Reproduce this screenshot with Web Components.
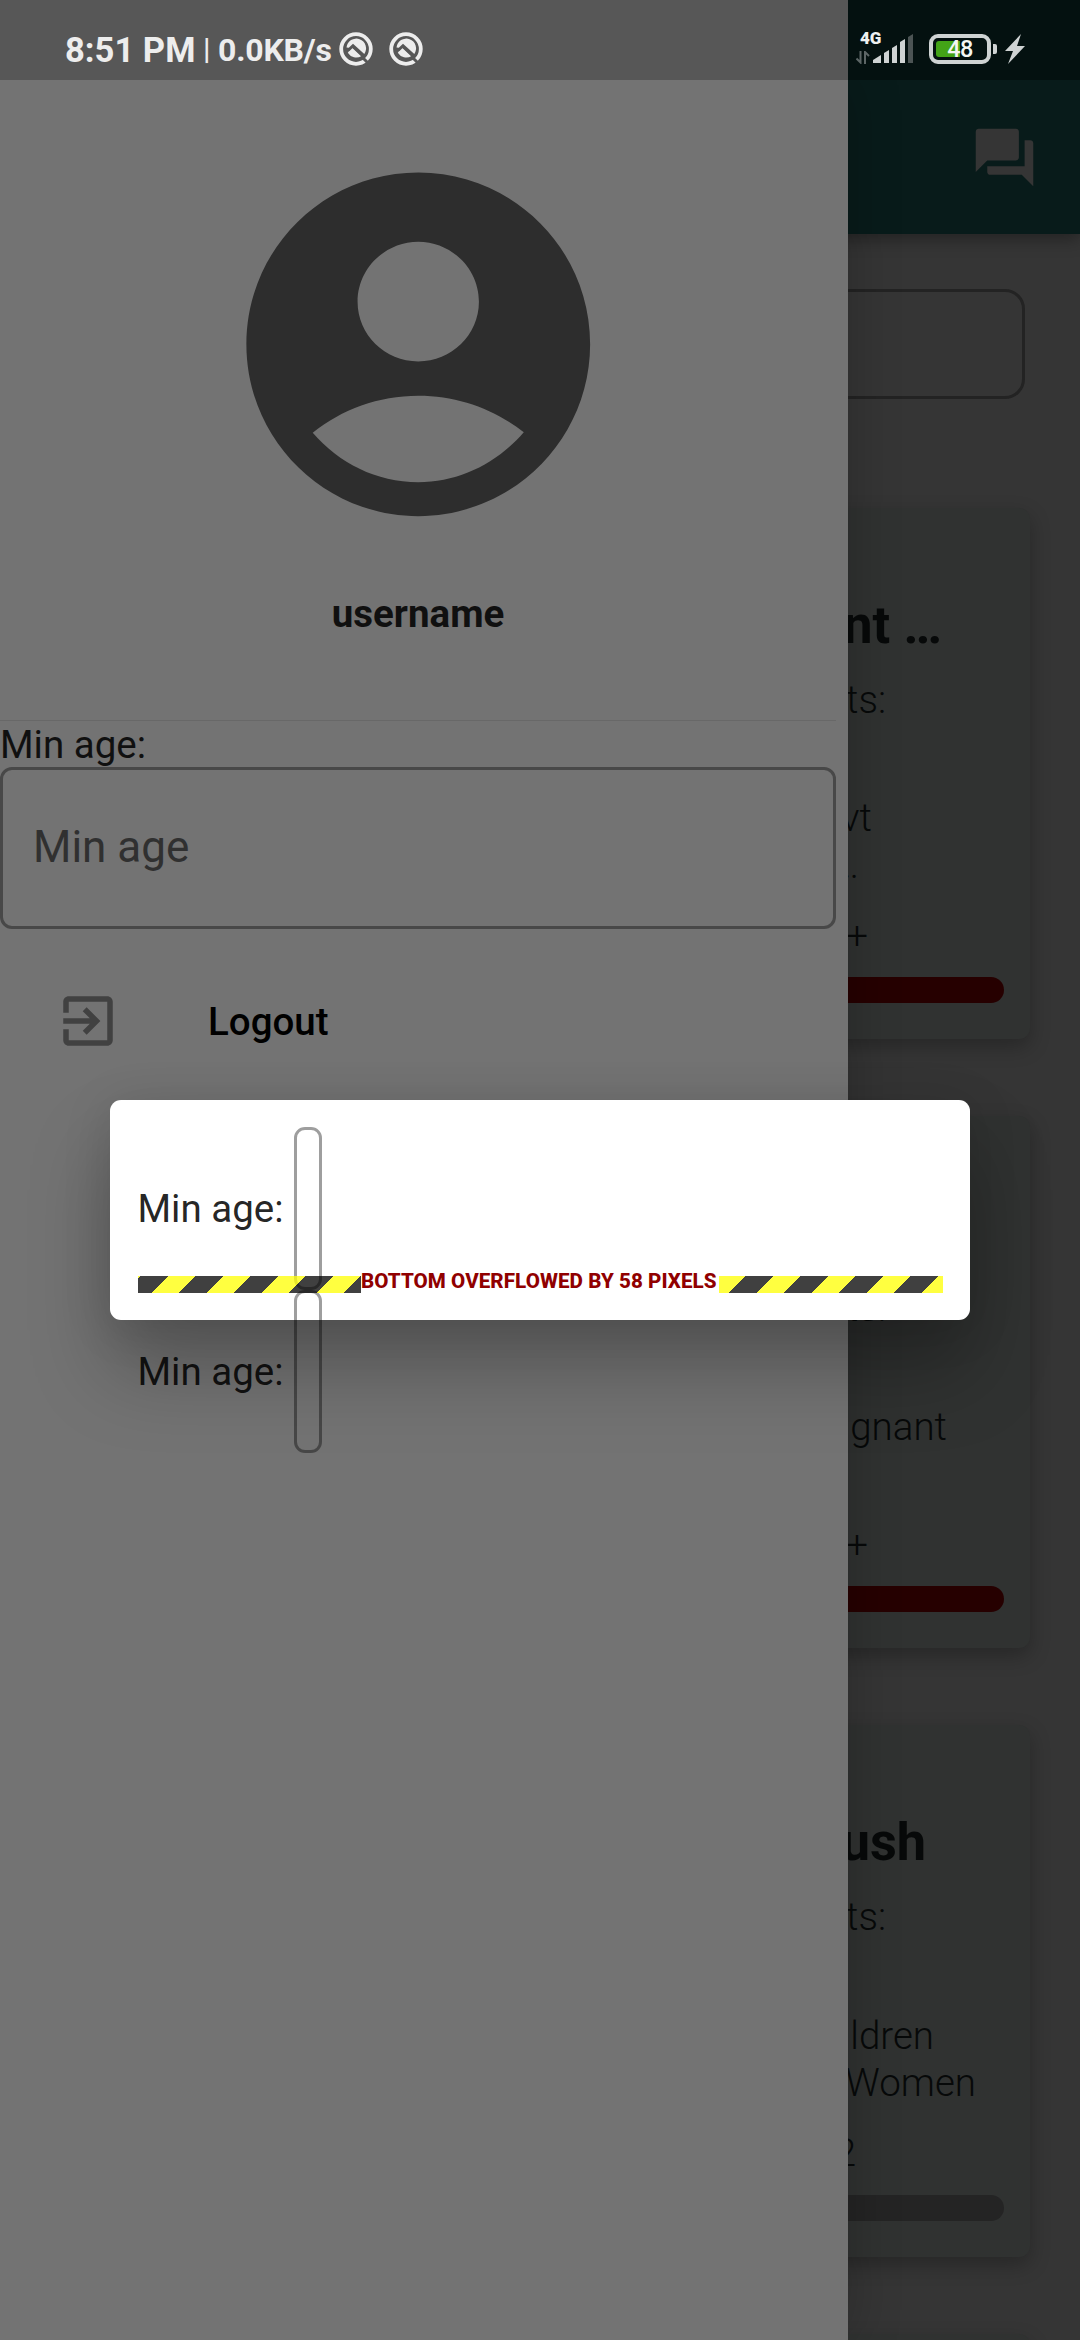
<!DOCTYPE html>
<html lang="en">
<head>
<meta charset="utf-8">
<title>Min age</title>
<style>
html,body{margin:0;padding:0;background:#353535}
body{font-family:Roboto,"Liberation Sans",sans-serif;width:1080px;height:2340px;overflow:hidden}
</style>
</head>
<body>
<app-screen></app-screen>
<script>
const define = (name, html) => customElements.define(name, class extends HTMLElement {
  constructor() {
    super();
    const t = document.createElement('template');
    t.innerHTML = html;
    this.attachShadow({ mode: 'open' }).appendChild(t.content.cloneNode(true));
  }
});

define('status-circle', `
<style>:host{display:flex;width:34px;height:34px}svg{display:block}</style>
<svg width="34" height="34" viewBox="0 0 34 34">
  <circle cx="17" cy="17" r="14.8" fill="none" stroke="#ededed" stroke-width="3.8"/>
  <path d="M7.5 15.500A9.8 9.8 0 1 1 25.300 22L14 11.800L9.800 15.800z" fill="#ededed"/>
  <path d="M13 15L22.500 24A9.8 9.8 0 0 1 8.800 20.800z" fill="#ededed"/>
  <path d="M9.5 18.500l4-3.800L25 25.500" stroke="#575757" stroke-width="2" fill="none"/>
  <path d="M23 25l6.500 6.500" stroke="#575757" stroke-width="3"/>
</svg>`);

define('status-bar', `
<style>
:host{display:flex;height:80px;color:#ededed;font-weight:700;white-space:nowrap}
.left{display:flex;width:848px;box-sizing:border-box;padding-left:65px;background:#575757;align-items:flex-start}
.right{display:flex;flex:1;background:#041110;align-items:flex-start}
.t{font-size:34.6px;line-height:40px;margin-top:30px;width:138px}
.p{font-size:30px;line-height:40px;margin-top:29px;width:15px;font-weight:500}
.k{font-size:32px;line-height:40px;margin-top:30px;width:121px;letter-spacing:-.2px}
status-circle{margin:32px 16px 0 0}
.net{width:15px;margin-left:8px;padding-top:29px}
.net b{display:block;font-size:17px;line-height:18px;margin-left:4px;color:#eef0f0}
.net svg{display:block;margin-top:4px}
.bars{margin:34px 0 0 2px}
.bat{box-sizing:border-box;width:62px;height:30px;border:4px solid #cfd3d3;border-radius:9px;margin:34px 0 0 16px;display:grid;align-items:center}
.fill{grid-area:1/1;width:24px;height:16px;background:#43a317;border-radius:3px 0 0 3px;margin-left:3px}
.bat b{grid-area:1/1;font-size:23.5px;line-height:22px;font-weight:500;color:#f4f6f4;text-align:center;z-index:1;letter-spacing:-.6px}
.nub{width:4px;height:10px;background:#cfd3d3;border-radius:0 2px 2px 0;margin:44px 0 0 2px}
.bolt{margin:34px 0 0 8px}
svg{display:block}
</style>
<div class="left"><span class="t">8:51 PM</span><span class="p">|</span><span class="k">0.0KB/s</span><status-circle></status-circle><status-circle></status-circle></div>
<div class="right">
  <div class="net"><b>4G</b><svg width="14" height="13" viewBox="0 0 14 13"><path d="M4.5 0v11.5L.5 7.5M9 13V1l4 4" fill="none" stroke="#5d6666" stroke-width="2"/></svg></div>
  <svg class="bars" width="40" height="29" viewBox="0 0 40 29"><g fill="#cfd3d3"><path d="M0 29v-3l8-5v8z"/><path d="M11 29V19l5-3v13z"/><path d="M19 29V14l5-3v18z"/><path d="M27 29V8l5-3v24z"/></g><path d="M35 29V3l5-3v29z" fill="#4c5454"/></svg>
  <div class="bat"><div class="fill"></div><b>48</b></div><div class="nub"></div>
  <svg class="bolt" width="20" height="30" viewBox="0 0 20 30"><path d="M16 0L0 17h8L3 30L20 12h-8z" fill="#cfd3d3"/></svg>
</div>`);

define('app-header', `
<style>
:host{display:flex;flex:none;height:154px;background:#081b1a;justify-content:flex-end;align-items:center;box-sizing:border-box;padding-right:41.5px;box-shadow:0 5px 16px rgba(0,0,0,.35)}
</style>
<svg width="69" height="69" viewBox="0 0 24 24" fill="#353535"><path d="M21 6h-2v9H6v2c0 .55.45 1 1 1h11l4 4V7c0-.55-.45-1-1-1zm-4 6V3c0-.55-.45-1-1-1H3c-.55 0-1 .45-1 1v14l4-4h10c.55 0 1-.45 1-1z"/></svg>`);

define('camp-card', `
<style>
:host{display:flex;flex-direction:column;box-sizing:border-box;height:531.5px;flex:none;border-radius:11px;background:#303231;padding:87px 26px 0;box-shadow:0 8px 20px rgba(0,0,0,.26);color:#070909;font-size:38.5px;font-weight:300;text-align:right;white-space:nowrap}
.title{height:62px;line-height:62px;font-size:52.25px;font-weight:700;margin-bottom:20px}
.sub{height:46px;line-height:46px;margin-bottom:71.7px}
.groups{height:94.6px;line-height:47.3px;margin-bottom:24px}
.ages{height:46px;line-height:46px;margin-bottom:18.7px}
.bar{height:26px;border-radius:13px;background:var(--bar,#260000)}
</style>
<div class="title"><slot name="title"></slot></div>
<div class="sub"><slot name="sub"></slot></div>
<div class="groups"><slot name="groups"></slot></div>
<div class="ages"><slot name="ages"></slot></div>
<div class="bar"></div>`);

define('home-page', `
<style>
:host{display:flex;flex-direction:column;background:#353535;overflow:hidden}
.search{flex:none;box-sizing:border-box;height:110px;margin:55px 55px 108.5px;border:3px solid #232323;border-radius:20px}
.list{display:flex;flex:none;flex-direction:column;gap:77.3px;padding:0 50px}
span,div[slot]{display:block}
</style>
<app-header></app-header>
<div class="search"></div>
<div class="list">
  <camp-card>
    <span slot="title" style="margin-right:62px">nt …</span>
    <span slot="sub" style="margin-right:118px">ts:</span>
    <div slot="groups"><span style="margin-right:132px">vt</span><span style="margin-right:145px">…</span></div>
    <span slot="ages" style="margin-right:136px">+</span>
  </camp-card>
  <camp-card>
    <span slot="sub" style="margin-right:118px">ts:</span>
    <div slot="groups"><span style="margin-right:57px">gnant</span></div>
    <span slot="ages" style="margin-right:136px">+</span>
  </camp-card>
  <camp-card style="--bar:#242424">
    <span slot="title" style="margin-right:78px">ush</span>
    <span slot="sub" style="margin-right:118px">ts:</span>
    <div slot="groups"><span style="margin-right:70px">ldren</span><span style="margin-right:28px">Women</span></div>
    <span slot="ages" style="margin-right:148px">2</span>
  </camp-card>
  <camp-card></camp-card>
</div>`);

define('side-drawer', `
<style>
:host{display:flex;flex-direction:column;box-sizing:border-box;width:848px;padding-right:12px;background:#737373;box-shadow:0 0 50px rgba(0,0,0,.22);color:#101010;font-size:38.5px;white-space:nowrap}
.head{display:flex;flex-direction:column;align-items:center;height:640px;border-bottom:1px solid #686868}
.head svg{margin-top:57.7px;display:block}
.name{font-weight:700;line-height:46px;margin-top:40.5px}
.label{line-height:48px;height:46px;padding-left:0}
.field{box-sizing:border-box;height:162px;border:3px solid #484848;border-radius:12px;display:flex;align-items:center;padding:0 0 2px 30px;font-size:44px;color:#303030}
.item{display:flex;align-items:center;height:66px;margin-top:59px;padding-left:55px;color:#000;font-weight:500}
.item svg{margin-right:87px}
</style>
<div class="head">
  <svg width="412.5" height="412.5" viewBox="0 0 24 24" fill="#2d2d2d"><path d="M12 2C6.48 2 2 6.48 2 12s4.480 10 10 10 10-4.480 10-10S17.520 2 12 2zM12 6.030c1.930 0 3.530 1.570 3.530 3.500S13.930 13 12 13s-3.530-1.540-3.530-3.470S10.070 6.030 12 6.030zM12 20.030c-2.430 0-4.620-1.120-6.140-2.880C7.550 15.800 9.680 15 12 15s4.450.8 6.140 2.120C16.620 18.880 14.430 20.030 12 20.030z"/></svg>
  <div class="name">username</div>
</div>
<div class="label">Min age:</div>
<div class="field">Min age</div>
<div class="item"><svg width="66" height="66" viewBox="0 0 24 24" fill="#414141"><path d="M10.090 15.590L11.500 17l5-5-5-5-1.410 1.410L12.670 11H3v2h9.670l-2.580 2.590zM19 3H5c-1.110 0-2 .9-2 2v4h2V5h14v14H5v-4H3v4c0 1.100.89 2 2 2h14c1.100 0 2-.9 2-2V5c0-1.100-.9-2-2-2z"/></svg><span>Logout</span></div>`);

define('age-row', `
<style>
:host{display:flex;align-items:center;height:162.8px;flex:none;font-size:38.5px;color:rgba(0,0,0,.87);white-space:nowrap}
.l{width:156.5px;line-height:46px;padding-top:2px}
.f{box-sizing:border-box;width:27.5px;height:162.8px;border:3px solid rgba(0,0,0,.38);border-radius:11px}
</style>
<div class="l"><slot></slot></div><div class="f"></div>`);

define('overflow-stripes', `
<style>
:host{display:flex;justify-content:center;align-items:center;height:16.5px;background:repeating-linear-gradient(135deg,rgba(255,255,0,.75) 0 1.9px,rgba(0,0,0,.75) 1.9px 21.35px,rgba(255,255,0,.75) 21.35px 38.89px)}
div{width:358px;height:24px;margin-top:-7px;flex:none;background:#fff;color:#900000;font-size:20.6px;line-height:24px;font-weight:800;letter-spacing:.06px;text-align:left;white-space:nowrap}
</style>
<div><slot></slot></div>`);

define('age-dialog', `
<style>
:host{display:flex;flex-direction:column;box-sizing:border-box;position:relative;width:860px;height:220px;border-radius:11px;background:#fff;padding:27px 27.5px;box-shadow:0 50px 80px rgba(0,0,0,.26),0 6px 50px rgba(0,0,0,.12)}
overflow-stripes{position:absolute;left:27.5px;right:27.5px;bottom:27.5px}
</style>
<age-row>Min age:</age-row><age-row>Min age:</age-row>
<overflow-stripes>BOTTOM OVERFLOWED BY 58 PIXELS</overflow-stripes>`);

define('app-screen', `
<style>
:host{display:grid;grid-template:80px 2260px/1080px;width:1080px;height:2340px;overflow:hidden}
status-bar{grid-area:1/1;z-index:2}
home-page{grid-area:2/1}
side-drawer{grid-area:2/1;z-index:1}
age-dialog{grid-area:2/1;z-index:3;justify-self:center;align-self:start;margin-top:1020px}
</style>
<home-page></home-page><side-drawer></side-drawer><status-bar></status-bar><age-dialog></age-dialog>`);
</script>
</body>
</html>
